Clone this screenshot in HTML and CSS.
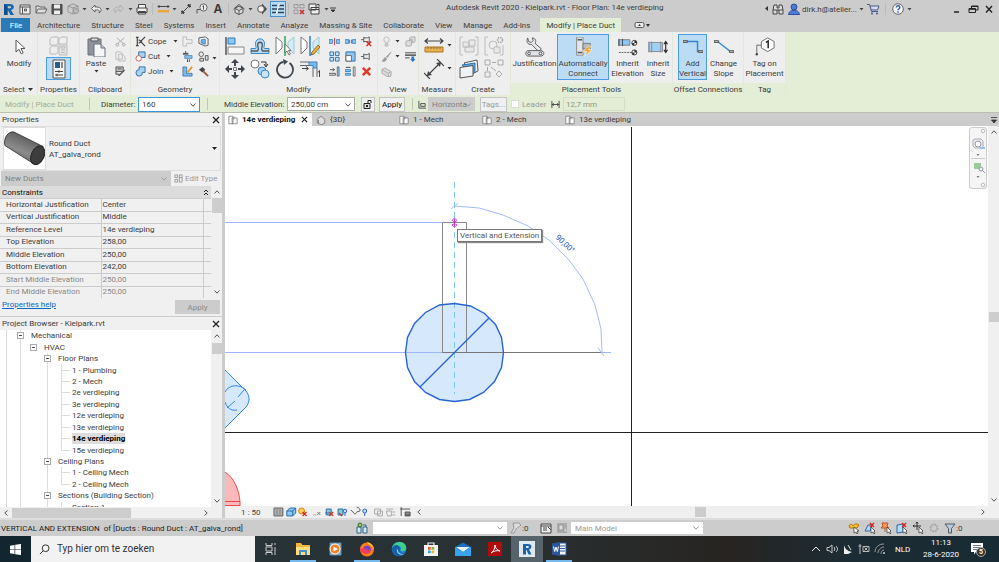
FILE: index.html
```html
<!DOCTYPE html>
<html lang="en">
<head>
<meta charset="utf-8">
<title>Autodesk Revit 2020 - Kielpark.rvt</title>
<link rel="stylesheet" href="styles.css">
</head>
<body>
<svg class="defs" aria-hidden="true">
  <symbol id="caret" viewBox="0 0 7 16"><path d="M1.500 7h4l-2 2.500z" fill="#444"/></symbol>
  <symbol id="dn" viewBox="0 0 7 5"><path d="M1.500 1h4l-2 2.500z" fill="#333"/></symbol>
  <symbol id="chev" viewBox="0 0 8 8"><path d="M1.500 2.500 4 5.200 6.500 2.500" fill="none" stroke="#555"/></symbol>
  <symbol id="x" viewBox="0 0 8 8"><path d="M1 1l6 6M7 1L1 7" stroke="#222" stroke-width="1.300"/></symbol>
  <symbol id="plan" viewBox="0 0 12 12"><path d="M1 1.500h5v9H1zM5 3.500h6v7H5zM7 2v3" fill="#fafafa" stroke="#777" stroke-width=".9"/></symbol>
</svg>
<div class="app">

<header class="titlebar">
  <div class="qat">
    <button class="ic" aria-label="Revit"><svg viewBox="0 0 16 16"><path d="M3 3h6c5 0 5 5 1 6l3 5h-3.500L7 9.500H6.500V14H3zM6.500 5.300v2H9c1.500 0 1.500-2 0-2z" fill="#1667ae"/><path d="M3 3l3.500 2.300V14H3z" fill="#0d4f8f"/></svg></button>
    <button class="ic" aria-label="Home"><svg viewBox="0 0 16 16"><path d="M3 4h10v9H3zM3 6h10M5.500 6v7M7.500 8h2v2h-2z" fill="#eee" stroke="#555"/></svg></button>
    <button class="ic" aria-label="Open"><svg viewBox="0 0 16 16"><path d="M3 12V5h3l1 1h5v2M3 12l2-4h9l-2 4z" fill="#ddd" stroke="#666"/></svg></button>
    <button class="ic" aria-label="Save"><svg viewBox="0 0 16 16"><path d="M3 3.500h10v9.500H3z" fill="#555" stroke="#444"/><path d="M5 3.500h6v4H5zM5 9.500h6V13H5z" fill="#eee"/></svg></button>
    <button class="ic" aria-label="Sync"><svg viewBox="0 0 16 16"><path d="M3 5l5-2 5 2v6l-5 2-5-2zM3 5l5 2 5-2M8 7v6" fill="#ccc" stroke="#999"/><circle cx="11" cy="10" r="2.500" fill="#bbb" stroke="#999"/></svg></button>
    <svg class="ca"><use href="#caret"/></svg>
    <button class="ic" aria-label="Undo"><svg viewBox="0 0 16 16"><path d="M7 4L3.500 7.500 7 11V9c4-.5 5 .5 4 3 4-3 2-6.500-4-6z" fill="#eee" stroke="#555" stroke-width=".9"/></svg></button>
    <svg class="ca"><use href="#caret"/></svg>
    <button class="ic" aria-label="Redo"><svg viewBox="0 0 16 16"><path d="M9 4l3.500 3.500L9 11V9c-4-.5-5 .5-4 3-4-3-2-6.500 4-6z" fill="#ccc" stroke="#aaa" stroke-width=".9"/></svg></button>
    <svg class="ca"><use href="#caret"/></svg>
    <button class="ic" aria-label="Print"><svg viewBox="0 0 16 16"><path d="M4.500 7V3.500h7V7M3 7h10v4.500H3zM4.500 10.500h7v2.500h-7z" fill="#f2f2f2" stroke="#444"/></svg></button>
    <i class="bar"></i>
    <button class="ic" aria-label="Measure"><svg viewBox="0 0 16 16"><path d="M3 5.500h11M4.500 4L3 5.500 4.500 7M12.500 4L14 5.500 12.500 7" fill="none" stroke="#444"/><path d="M3 9h11v2.500H3z" fill="#e9a73c"/></svg></button>
    <svg class="ca"><use href="#caret"/></svg>
    <button class="ic" aria-label="Dimension"><svg viewBox="0 0 16 16"><path d="M4 12L12 4M3 10l3 3M10 3l3 3" stroke="#444"/><path d="M3 13l1-4 3 3zM13 3l-1 4-3-3z" fill="#444"/></svg></button>
    <button class="ic" aria-label="Tag"><svg viewBox="0 0 16 16"><circle cx="9.500" cy="6.500" r="3.600" fill="#eee" stroke="#666"/><path d="M3 12.500V8.500h3M8.500 5.500l1-.8v4" fill="none" stroke="#555"/></svg></button>
    <button class="ic glyph">A</button>
    <i class="bar"></i>
    <button class="ic" aria-label="3D view"><svg viewBox="0 0 16 16"><path d="M2.500 8L8 3.500 13.500 8M4 7.500v4l4 2 4-2v-4L8 5z" fill="#ddd" stroke="#555"/><path d="M4 7.500l4 2 4-2M8 9.500v4" fill="none" stroke="#555"/></svg></button>
    <svg class="ca"><use href="#caret"/></svg>
    <button class="ic" aria-label="Section"><svg viewBox="0 0 16 16"><path d="M8 2.500l5 5.500-5 5.500z" fill="#444"/><circle cx="7" cy="8" r="3.300" fill="#eee" stroke="#555"/></svg></button>
    <button class="ic on" aria-label="Thin lines"><svg viewBox="0 0 16 16"><path d="M2 4.500h5M9 4.500h5M2 8h5M8 8h6M2 11.500h4M8 11.500h6" stroke="#2c4258" stroke-width="1.500"/><path d="M9.500 3L6 13" stroke="#fff"/></svg></button>
    <i class="bar"></i>
    <button class="ic" aria-label="Close hidden"><svg viewBox="0 0 16 16"><path d="M3 3.500h4v3.500H3zM9 3.500h4v3.500H9zM3 9h4v3.500H3z" fill="none" stroke="#888" stroke-dasharray="1.500 .7"/><path d="M9 9l4 4M13 9l-4 4" stroke="#c33" stroke-width="1.700"/></svg></button>
    <button class="ic" aria-label="Switch windows"><svg viewBox="0 0 16 16"><path d="M2 3h7v6H2zM4 6.500h8v6.500H4zM4 8.500h8M10 3.500h2v2" fill="#eee" stroke="#444"/></svg></button>
    <svg class="ca"><use href="#caret"/></svg>
    <svg class="ca"><path d="M0 7h6M1 9h4l-2 2z" stroke="#333" fill="#333" stroke-width=".9"/></svg>
  </div>
  <h1 class="title">Autodesk Revit 2020 - Kielpark.rvt - Floor Plan: 14e verdieping</h1>
  <div class="info">
    <svg class="ca"><path d="M5 5v5L2 7.500z" fill="#333"/></svg>
    <button class="ic" aria-label="Search"><svg viewBox="0 0 16 16"><path d="M4 4h3v3h2V4h3l1 5v4H9V9H7v4H3V9zM3 9h4M9 9h4" fill="#ddd" stroke="#444"/></svg></button>
    <button class="ic" aria-label="Account"><svg viewBox="0 0 16 16"><circle cx="8" cy="6" r="3" fill="#4f7bd8" stroke="#2a4e9e"/><path d="M2.500 13.500c.5-3.500 3-4 5.500-4s5 .5 5.500 4z" fill="#4f7bd8" stroke="#2a4e9e"/></svg></button>
    <span class="user">dirk.h@atelier...</span>
    <svg class="ca"><use href="#caret"/></svg>
    <button class="ic" aria-label="Store"><svg viewBox="0 0 16 16"><path d="M2 3.500h2.500l2 7H13M5 5h9l-1.500 4H6" fill="#dde" stroke="#455a8c"/><circle cx="7" cy="12.500" r="1" fill="#455a8c"/><circle cx="12" cy="12.500" r="1" fill="#455a8c"/></svg></button>
    <i class="bar wide"></i>
    <button class="ic" aria-label="Help"><svg viewBox="0 0 16 16"><circle cx="8" cy="8" r="5.300" fill="#f4f4f4" stroke="#667"/><path d="M6.300 6.500c0-2.300 3.500-2.200 3.500 0C9.800 8 8 7.800 8 9.200M8 10.300v1.400" fill="none" stroke="#2460b0" stroke-width="1.400"/></svg></button>
    <svg class="ca"><use href="#caret"/></svg>
  </div>
  <div class="wbtns">
    <button class="ic" aria-label="Minimize"><svg viewBox="0 0 16 16"><path d="M5 11h5" stroke="#222" stroke-width="1.500"/></svg></button>
    <button class="ic" aria-label="Restore"><svg viewBox="0 0 16 16"><path d="M6.500 7V5h6.500v4h-2M4 7.500h6.500v4H4zM4 8.300h6.500M6.500 5.500H13" fill="none" stroke="#222"/></svg></button>
    <button class="ic" aria-label="Close"><svg viewBox="0 0 16 16"><path d="M5 5l6 6.500M11 5l-6 6.500" stroke="#222" stroke-width="1.400"/></svg></button>
  </div>
</header>

<nav class="tabs">
  <a class="file" href="#">File</a><a href="#">Architecture</a><a href="#">Structure</a><a href="#">Steel</a><a href="#">Systems</a><a href="#">Insert</a><a href="#">Annotate</a><a href="#">Analyze</a><a href="#">Massing &amp; Site</a><a href="#">Collaborate</a><a href="#">View</a><a href="#">Manage</a><a href="#">Add-Ins</a><a class="ctx" href="#">Modify | Place Duct</a>
  <button class="ribtoggle" aria-label="Ribbon display"><svg width="20" height="10"><rect x="2" y="2.500" width="9" height="5" rx="1.500" fill="#eee" stroke="#555"/><path d="M5 6l1.500-2L8 6zM13 4h4l-2 3z" fill="#333"/></svg></button>
</nav>

<section class="ribbon">
  <div class="panel p-select"><div class="body"><button class="big">
    <svg class="i20" viewBox="0 0 20 20"><path d="M7 3v12l3-2.700 2.200 4.500 2-1-2.200-4.300H16z" fill="#fff" stroke="#555"/></svg><span>Modify</span></button></div><div class="lab">Select <svg width="7" height="5"><path d="M1 1h5L3.500 4z" fill="#333"/></svg></div></div>

  <div class="panel p-props"><div class="body stack">
    <button class="cell25" aria-label="Type properties"><svg class="i20" viewBox="0 0 20 20"><path d="M1 3l2-2h6v6l-2 2H1zM10 3l2-2h6v6l-2 2h-6zM1 12l2-2h6v6l-2 2H1z" fill="#eee" stroke="#bbb"/><path d="M10 8h8v11h-8zM12 10h4v2h-4zM12 14h4M12 16.500h4" fill="#e4e4e4" stroke="#bbb"/></svg></button>
    <button class="cell25 hot" aria-label="Properties"><svg class="i20" viewBox="0 0 20 20"><path d="M4 1h12v18H4z" fill="#f6f6f6" stroke="#555"/><path d="M6 3h5v6H6z" fill="#2a5d88"/><path d="M13 3v6M6 12.500h8M6 16h8" stroke="#444" stroke-width="1.200"/><path d="M10 11.200v2.600M8 14.700v2.600" stroke="#444"/></svg></button></div><div class="lab">Properties</div></div>

  <div class="panel p-clip"><div class="body"><button class="big paste"><svg class="i20" viewBox="0 0 20 20"><path d="M2 2h13v16H2z" fill="#8e939b" stroke="#6a707a"/><path d="M5 1h7v3H5z" fill="#ddd" stroke="#555"/><path d="M8 7h7l4 4v9H8z" fill="#f5f6f8" stroke="#6a707a"/><path d="M15 7v4h4" fill="#ccd" stroke="#6a707a"/></svg><span>Paste</span><svg class="dd"><use href="#dn"/></svg></button>
    <div class="col"><button class="sm" aria-label="Cut"><svg viewBox="0 0 12 12"><path d="M2 2l8 7M10 2L2 9" stroke="#aaa"/><circle cx="2.500" cy="9.500" r="1.500" fill="none" stroke="#aaa"/><circle cx="9.500" cy="9.500" r="1.500" fill="none" stroke="#aaa"/></svg></button>
    <button class="sm" aria-label="Copy"><svg viewBox="0 0 12 12"><path d="M1 1h5l2 2v6H1zM4 3.500h4l3 3V11H4z" fill="#eee" stroke="#bbb"/></svg></button>
    <button class="sm" aria-label="Match type"><svg viewBox="0 0 12 12"><path d="M1 1h8v5H1zM3 3h4M1 6v3h4" fill="#bbb" stroke="#555"/><path d="M11 5L5 11H3.500L4 9.500 10 4z" fill="#555"/></svg></button></div></div><div class="lab">Clipboard</div></div>

  <div class="panel p-geo"><div class="body"><div class="col texts">
    <button class="tx"><svg viewBox="0 0 12 12"><path d="M1 1.500h3M1 10.500h3M2.500 1.500v9M11 1L6 6l5 5M4 4l3 2-3 2" fill="none" stroke="#444" stroke-width="1.300"/></svg><span>Cope</span><svg class="dd"><use href="#dn"/></svg></button>
    <button class="tx"><svg viewBox="0 0 12 12"><path d="M4 1h7v6H4z" fill="#a9d2f1" stroke="#2a6ca5"/><circle cx="4" cy="8" r="3" fill="#fff" stroke="#c55"/></svg><span>Cut</span><svg class="dd"><use href="#dn"/></svg></button>
    <button class="tx"><svg viewBox="0 0 12 12"><path d="M4.500 1H11v6H8a3.500 3.500 0 1 1-3.500-3z" fill="#a9d2f1" stroke="#2a6ca5"/></svg><span>Join</span><svg class="dd"><use href="#dn"/></svg></button></div>
    <div class="col"><button class="sm" aria-label="Wall joins"><svg viewBox="0 0 12 12"><path d="M1 1h4v3h6v4H5v3H1z" fill="#eee" stroke="#bbb"/></svg></button>
    <button class="sm" aria-label="Beam joins"><svg viewBox="0 0 12 12"><path d="M1 2h6v2H1z" fill="#555"/><path d="M3 5h8v3H3z" fill="#8cc3ec" stroke="#2a6ca5" stroke-width=".7"/><path d="M6 9v3M8 9v3M4 0v2" stroke="#444"/></svg></button>
    <button class="sm" aria-label="Paint"><svg viewBox="0 0 12 12"><path d="M1 1v10h10V8H5V1z" fill="#7db8e6" stroke="#2a6ca5" stroke-width=".8"/><path d="M11 1L6 7" stroke="#e69a2c" stroke-width="2"/></svg></button></div>
    <div class="col"><button class="sm" aria-label="Split face"><svg viewBox="0 0 12 12"><path d="M1 2l7-1 3 2v7l-3 1-7-3z" fill="#f4f4f4" stroke="#555"/><path d="M3.500 4L8 3.500V9l-4.500-1.500z" fill="#6fb3ea" stroke="#2a6ca5" stroke-width=".7"/></svg></button>
    <button class="sm" aria-label="Demolish"><svg viewBox="0 0 12 12"><circle cx="3.500" cy="3.500" r="2.500" fill="#eee" stroke="#555"/><path d="M2 8h4v3H2zM8 5h3v5H8z" fill="#ddd" stroke="#555"/></svg></button>
    <button class="sm" aria-label="Hammer"><svg viewBox="0 0 12 12"><path d="M1 4l4-3 3 3-3 3z" fill="#444"/><path d="M6 6l5 5" stroke="#a5563c" stroke-width="2"/></svg></button></div>
    <svg class="dd mid"><use href="#dn"/></svg></div><div class="lab">Geometry</div></div>

  <div class="panel p-mod"><div class="body"><div class="bigs">
    <button class="cell25" aria-label="Align"><svg class="i20" viewBox="0 0 20 20"><path d="M1 1v18" stroke="#555" stroke-width="1.500"/><path d="M3 2h7v6H3z" fill="#8cc8f5" stroke="#2a7ac0"/><path d="M3 11h16v7H3z" fill="#f6f6f6" stroke="#888"/></svg></button>
    <button class="cell25" aria-label="Offset"><svg class="i20" viewBox="0 0 20 20"><path d="M1 17.500v-5h4.500c1 0 .5-1.500 0-4C4.500 1 15.500 1 14.500 8.500c-.5 2.500-1 4 0 4H19v5H1z" fill="#b8dcf6" stroke="#3b85c2"/><path d="M1 15h6.500c2-1.500 0-3.500.2-6.500.3-3 4.300-3 4.600 0 .2 3-1.800 5 .2 6.500H19" fill="none" stroke="#555" stroke-width="1.300"/></svg></button>
    <button class="cell25" aria-label="Mirror pick axis"><svg class="i20" viewBox="0 0 20 20"><path d="M1 1l6 5v6l-6 6z" fill="#fff" stroke="#777"/><path d="M19 1l-6 5v6l6 6z" fill="#d4ecfa" stroke="#9cc"/><path d="M10 0v20" stroke="#32a852" stroke-width="1.500"/><path d="M10 8v9l2-2 2 4 1.500-1-2-3.500H16z" fill="#fff" stroke="#555" stroke-width=".8"/></svg></button>
    <button class="cell25" aria-label="Mirror draw axis"><svg class="i20" viewBox="0 0 20 20"><path d="M1 1l6 5v6l-6 6z" fill="#fff" stroke="#777"/><path d="M19 1l-6 5v6l6 6z" fill="#d4ecfa" stroke="#9cc"/><path d="M10 0v20" stroke="#2a7fd0" stroke-width="1.500"/><path d="M18 9l-6 7-1 3 3-1 6-7z" fill="#f0b040" stroke="#7a5a20" stroke-width=".8"/></svg></button>
    <button class="cell25" aria-label="Move"><svg class="i20" viewBox="0 0 20 20"><path d="M10 0l4 4H6zM10 20l4-4H6zM0 10l4-4v8zM20 10l-4-4v8zM9 4h2v3H9zM9 13h2v3H9zM4 9h3v2H4zM13 9h3v2h-3z" fill="#3f4650"/><path d="M8.500 8.500h3v3h-3z" fill="none" stroke="#777"/></svg></button>
    <button class="cell25" aria-label="Copy"><svg class="i20" viewBox="0 0 20 20"><circle cx="5" cy="5" r="4" fill="#fff" stroke="#777"/><circle cx="12" cy="12" r="4" fill="#a9d2f1" stroke="#3b85c2"/><circle cx="15" cy="15" r="4" fill="#c9e3f7" stroke="#3b85c2"/><path d="M11 3h5v4M14 5l2 3 2-3" fill="none" stroke="#333"/></svg></button>
    <button class="cell25" aria-label="Rotate"><svg class="i20" viewBox="0 0 20 20"><path d="M14.500 4a8 8 0 1 1-6-1.200" fill="none" stroke="#3f4650" stroke-width="1.800"/><path d="M8 0l5 2.500L9 6z" fill="#3f4650"/></svg></button>
    <button class="cell25" aria-label="Trim"><svg class="i20" viewBox="0 0 20 20"><path d="M0 3h9M0 6.500h9" stroke="#666"/><path d="M9 3h8v6h-4V6.500H9z" fill="#7db8e6" stroke="#3b85c2"/><path d="M13 9v9M17 9v9" stroke="#666"/><path d="M2 9.500h6M6 7.500l2.500 2L6 11.500M19.500 18v-6M18 13.500l1.500-2 1 2" fill="none" stroke="#444"/></svg></button></div>
    <div class="grid3">
    <button class="sm" aria-label="Split"><svg viewBox="0 0 12 12"><path d="M0 4h4v4H0zM8 4h4v4H8z" fill="#8cc8f5" stroke="#3b85c2"/><path d="M6 2v8" stroke="#c44"/></svg></button>
    <button class="sm" aria-label="Split gap"><svg viewBox="0 0 12 12"><path d="M0 4h4v4H0zM8 4h4v4H8z" fill="#8cc8f5" stroke="#3b85c2"/><path d="M5 4v4M7 4v4" stroke="#c44"/></svg></button>
    <button class="sm" aria-label="Unpin"><svg viewBox="0 0 12 12"><path d="M0 4h3M3 1v6M3 2h4l2-1v6L7 6H3" fill="#eee" stroke="#555"/><path d="M6 6l5 5M11 6l-5 5" stroke="#d22" stroke-width="1.500"/></svg></button>
    <button class="sm" aria-label="Array"><svg viewBox="0 0 12 12"><path d="M1 1h4v4H1zM7 1h4v4H7zM1 7h4v4H1zM7 7h4v4H7z" fill="#c9e3f7" stroke="#2a6ca5"/></svg></button>
    <button class="sm" aria-label="Scale"><svg viewBox="0 0 12 12"><path d="M1 1h10v10H1z" fill="#8cc8f5" stroke="#2a6ca5"/><path d="M1 5h6v6H1z" fill="#fff" stroke="#666"/></svg></button>
    <button class="sm" aria-label="Pin"><svg viewBox="0 0 12 12"><path d="M0 6h3M3 3v6M3 4h4l2-1.500v7L7 8H3" fill="#eee" stroke="#555"/></svg></button>
    <button class="sm" aria-label="Extend single"><svg viewBox="0 0 12 12"><path d="M1 4h5M4 2.500L6 4 4 5.500M0 8h7v2H0" stroke="#555" fill="none"/><path d="M9 1h2v10H9z" fill="#8cc8f5" stroke="#555" stroke-width=".8"/></svg></button>
    <button class="sm" aria-label="Extend multiple"><svg viewBox="0 0 12 12"><path d="M0 4h6v2H0zM0 8h6v2H0z" stroke="#3b85c2" fill="#8cc8f5"/><path d="M1 1.500h5" stroke="#444"/><path d="M9 1h2v10H9z" fill="#ddd" stroke="#555" stroke-width=".8"/></svg></button>
    <button class="sm" aria-label="Delete"><svg viewBox="0 0 12 12"><path d="M2 2l8 8M10 2l-8 8" stroke="#e03a2e" stroke-width="2.800"/></svg></button></div></div><div class="lab">Modify</div></div>

  <div class="panel p-view"><div class="body"><div class="col">
    <button class="sm" aria-label="Hide"><svg viewBox="0 0 12 12"><circle cx="6" cy="4" r="3" fill="#eee" stroke="#bbb"/><path d="M4.500 8h3v3h-3z" fill="#ccc" stroke="#bbb"/></svg></button>
    <button class="sm" aria-label="Override"><svg viewBox="0 0 12 12"><path d="M11 1L6 6l1 1zM5 7c-2 0-2 3-4 4 3 1 5 0 5-3z" fill="#999" stroke="#aaa"/></svg></button>
    <button class="sm" aria-label="Box"><svg viewBox="0 0 12 12"><path d="M1 4l3-2 7 4v5l-3 1-7-4zM1 4l7 4v4M8 8l3-2" fill="#ddd" stroke="#aaa"/></svg></button></div>
    <div class="col thin"><span><svg class="dd"><use href="#dn"/></svg></span><span><svg class="dd"><use href="#dn"/></svg></span></div>
    <div class="col"><button class="sm" aria-label="Displace"><svg viewBox="0 0 12 12"><path d="M1 6l2-1h4v5l-1 1H1zM5 2l2-1h4v5l-1 1H8V4H5z" fill="#ddd" stroke="#aaa"/></svg></button>
    <button class="sm" aria-label="Linework"><svg viewBox="0 0 12 12"><path d="M0 2h12" stroke="#444"/><path d="M0 4.500h12" stroke="#444" stroke-width="1.500"/><path d="M0 7.500h5" stroke="#444"/><path d="M7 6h3v3h1.500l-3 3-3-3H7z" fill="#2f78bd"/></svg></button></div></div><div class="lab">View</div></div>

  <div class="panel p-meas"><div class="body"><div class="bigcol">
    <button class="cell25" aria-label="Measure"><svg class="i20" viewBox="0 0 20 20"><path d="M1 5h18M4 2.500L1 5l3 2.500M16 2.500L19 5l-3 2.500" fill="none" stroke="#444" stroke-width="1.200"/><path d="M1 11h18v5H1z" fill="#eab04a" stroke="#a87722"/><path d="M4 11v2M7 11v2M10 11v2M13 11v2M16 11v2" stroke="#865"/></svg></button>
    <button class="cell25" aria-label="Dimension"><svg class="i20" viewBox="0 0 20 20"><path d="M3 17L17 3M0 14l6 6M13 0l7 7" stroke="#444" stroke-width="1.200"/><path d="M3 17l1-5 4 4zM17 3l-1 5-4-4z" fill="#444"/></svg></button></div>
    <div class="carets"><svg class="dd"><use href="#dn"/></svg><svg class="dd"><use href="#dn"/></svg></div></div><div class="lab">Measure</div></div>

  <div class="panel p-create"><div class="body"><div class="bigs two">
    <button class="cell25" aria-label="Create assembly"><svg class="i20" viewBox="0 0 20 20"><path d="M4 1H1v18h3M16 1h3v18h-3" fill="none" stroke="#bbb"/><path d="M4 6h6v5H4zM10 4h6v6h-6zM6 11h9v5H6z" fill="#e8e8e8" stroke="#bbb"/></svg></button>
    <button class="cell25" aria-label="Create parts"><svg class="i20" viewBox="0 0 20 20"><path d="M4 1H1v18h3M16 19h3V9" fill="none" stroke="#bbb"/><circle cx="9" cy="9" r="4" fill="#eee" stroke="#bbb"/><path d="M10 11h6v6h-6z" fill="#e8e8e8" stroke="#bbb"/><circle cx="16" cy="4" r="2.500" fill="none" stroke="#aaa" stroke-width="1.600" stroke-dasharray="1.500 .8"/></svg></button>
    <button class="cell25" aria-label="Create group"><svg class="i20" viewBox="0 0 20 20"><path d="M5 4l13-3 1 11-4 2z" fill="#fff" stroke="#555"/><path d="M3 6l13-2v9l-3 3z" fill="#5aa7e8" stroke="#2a6ca5"/><path d="M1 8.500l13-2v10.500l-13 2z" fill="#f0f2f4" stroke="#555"/></svg></button>
    <button class="cell25" aria-label="Create similar"><svg class="i20" viewBox="0 0 20 20"><path d="M1 1h5v5H1zM14 1h5v5h-5zM1 13h5v5H1zM15 12l3 3-3 3-3-3zM8 3.500h4M3.500 8v4M7 8l5 4" fill="#eee" stroke="#aaa"/></svg></button></div></div><div class="lab">Create</div></div>

  <div class="panel ctxp p-place"><div class="body">
    <button class="big"><svg class="i22" viewBox="0 0 22 22"><path d="M3 1l1 4 3 1 2-2-1-3c3 0 5 3 3 6l7 6-3 3-8-8C3 9 1 5 3 1z" fill="#e8eaee" stroke="#555"/><path d="M3 15h14c5 0 5 6 0 6H4c-4 0-4-5-1-6z" fill="#dfe3e8" stroke="#555"/><circle cx="4.500" cy="18" r="1.500" fill="#fff" stroke="#444"/><circle cx="17" cy="18" r="1.500" fill="#fff" stroke="#444"/></svg><span>Justification</span></button>
    <button class="big hot"><svg class="i22" viewBox="0 0 22 22"><path d="M4 0h7v20H4z" fill="#e4e7ea" stroke="#888"/><path d="M5 3h5M5 17h5" stroke="#555" stroke-width="1.500"/><path d="M11 7h8v6h-8z" fill="#b7bcc4" stroke="#777"/><path d="M17 10l-6 6h4l-2 5 8-7h-4l3-4z" fill="#f7a427" stroke="#fff" stroke-width=".6"/></svg><span>Automatically<br>Connect</span></button>
    <button class="big"><svg class="i22" viewBox="0 0 22 22"><path d="M1 3h12v6H1z" fill="#8cc8f5" stroke="#777"/><path d="M1 2v8M5 2v8" stroke="#444"/><path d="M1 17h14" stroke="#555" stroke-dasharray="2 1"/><circle cx="18" cy="6.500" r="2.800" fill="#fff" stroke="#333"/><circle cx="18" cy="17" r="2.800" fill="#fff" stroke="#333"/><path d="M18 6.500V3.700a2.800 2.800 0 0 1 2.800 2.800zM18 6.500v2.800a2.800 2.800 0 0 1-2.800-2.800zM18 17v-2.800a2.800 2.800 0 0 1 2.800 2.800zM18 17v2.800a2.800 2.800 0 0 1-2.800-2.800z" fill="#333"/></svg><span>Inherit<br>Elevation</span></button>
    <button class="big"><svg class="i22" viewBox="0 0 22 22"><path d="M1 6h15v10H1z" fill="#9fd0f3" stroke="#888"/><path d="M1 5v12M4 5v12M14 5v12" stroke="#889"/><path d="M19.500 5v12M17.500 8l2-3 2 3M17.500 14l2 3 2-3" fill="none" stroke="#222" stroke-width="1.200"/></svg><span>Inherit<br>Size</span></button></div><div class="lab">Placement Tools</div></div>

  <div class="panel ctxp p-off"><div class="body">
    <button class="big hot"><svg class="i22" viewBox="0 0 22 22"><path d="M2 5h14v11h4" fill="none" stroke="#2f86d6" stroke-width="1.600"/><path d="M0 4h5v2H0zM17 15h5v2h-5z" fill="#bbb" stroke="#555"/></svg><span>Add<br>Vertical</span></button>
    <button class="big"><svg class="i22" viewBox="0 0 22 22"><path d="M4 5l14 11" fill="none" stroke="#2f86d6" stroke-width="1.600"/><path d="M0 4h5v2H0zM17 15h5v2h-5z" fill="#bbb" stroke="#555"/></svg><span>Change<br>Slope</span></button></div><div class="lab">Offset Connections</div></div>

  <div class="panel ctxp p-tag"><div class="body"><button class="big"><svg class="i22" viewBox="0 0 22 22"><path d="M2 19V9h6" fill="none" stroke="#666"/><circle cx="2" cy="19" r="1.300" fill="#444"/><path d="M14 1l7 4v7l-7 4-7-4V5z" fill="#fff" stroke="#666"/><path d="M12 6l2.500-1.500v8" fill="none" stroke="#222" stroke-width="1.600"/></svg><span>Tag on<br>Placement</span></button></div><div class="lab">Tag</div></div>
</section>

<form class="options">
  <span class="mode">Modify | Place Duct</span><i class="bar"></i>
  <label class="l1" for="dia">Diameter:</label>
  <span class="combo focus"><select id="dia"><option>160</option></select><svg><use href="#chev"/></svg></span><i class="bar b2"></i>
  <label class="l2" for="mel">Middle Elevation:</label>
  <span class="combo mel"><select id="mel"><option>250,00 cm</option></select><svg><use href="#chev"/></svg></span>
  <button type="button" class="btn lock" aria-label="Lock elevation"><svg width="10" height="10"><path d="M1 4.500h6v5H1z" fill="#ddd" stroke="#222"/><path d="M5 4V1.500h3V4" fill="none" stroke="#222"/><path d="M3 6h2v2H3z" fill="#222"/></svg></button>
  <button type="button" class="btn apply">Apply</button><i class="bar b3"></i>
  <svg class="oi" viewBox="0 0 10 10"><path d="M1 1v8h8M3 4h5v3H3z" fill="none" stroke="#444"/></svg>
  <span class="combo off"><select aria-label="Tag orientation" disabled><option>Horizonta</option></select><svg><use href="#chev"/></svg></span>
  <button type="button" class="btn tags" disabled>Tags...</button>
  <input class="chk" type="checkbox" id="ldr" disabled><label class="gray" for="ldr">Leader</label>
  <svg class="oi ln" viewBox="0 0 10 10"><path d="M1 1v8M9 1v8M1 5h8M3 3.500L1.500 5 3 6.500M7 3.500L8.500 5 7 6.500" fill="none" stroke="#444"/></svg>
  <input class="len" type="text" value="12,7 mm" aria-label="Leader length" disabled>
</form>

<main class="work">
  <aside class="side">
    <section class="props">
      <header class="phead"><h2>Properties</h2><button aria-label="Close Properties"><svg><use href="#x"/></svg></button></header>
      <div class="type"><div class="thumb"><svg viewBox="0 0 42 42"><defs><linearGradient id="cyl" x1="0" y1="1" x2=".5" y2="0"><stop offset="0" stop-color="#444"/><stop offset=".5" stop-color="#8c8c8c"/><stop offset="1" stop-color="#555"/></linearGradient></defs><path d="M10 4C4 3-1 11 1 18l30 19 9-18z" fill="url(#cyl)" stroke="#222" stroke-width=".8"/><ellipse cx="34.500" cy="28" rx="6.500" ry="10" transform="rotate(25 34.500 28)" fill="#3d3d3d" stroke="#222"/></svg></div><p>Round Duct<br>AT_galva_rond</p><svg class="dd" viewBox="0 0 7 5"><path d="M1 1h5L3.500 4z" fill="#222"/></svg></div>
      <div class="inst"><span class="combo off"><select aria-label="Instance filter" disabled><option>New Ducts</option></select><svg><use href="#chev"/></svg></span><button class="edit" disabled><svg viewBox="0 0 10 10"><path d="M1 1h3v3H1zM6 1h3v8H6zM1 6h3v3H1zM6 4h3" fill="none" stroke="#999"/></svg>Edit Type</button></div>
      <div class="pgrid"><div class="pt"><div class="grp"><span>Constraints</span><svg viewBox="0 0 6 8"><path d="M1 4l2-2 2 2M1 7l2-2 2 2" fill="none" stroke="#222"/></svg></div>
        <table><tbody>
        <tr><th>Horizontal Justification</th><td>Center</td><td></td></tr>
        <tr><th>Vertical Justification</th><td>Middle</td><td></td></tr>
        <tr><th>Reference Level</th><td>14e verdieping</td><td></td></tr>
        <tr><th>Top Elevation</th><td>258,00</td><td></td></tr>
        <tr><th>Middle Elevation</th><td>250,00</td><td></td></tr>
        <tr><th>Bottom Elevation</th><td>242,00</td><td></td></tr>
        <tr class="ro"><th>Start Middle Elevation</th><td>250,00</td><td></td></tr>
        <tr class="ro"><th>End Middle Elevation</th><td>250,00</td><td></td></tr>
        </tbody></table></div>
        <div class="vs"><svg class="up"><use href="#chev"/></svg><i class="th t1"></i><svg><use href="#chev"/></svg></div></div>
      <div class="pfoot"><a href="#">Properties help</a><button disabled>Apply</button></div>
    </section>
    <section class="browser">
      <header class="phead"><h2>Project Browser - Kielpark.rvt</h2><button aria-label="Close Project Browser"><svg><use href="#x"/></svg></button></header>
      <div class="treewrap"><ul class="tree">
        <li class="n1"><b class="box"></b>Mechanical</li>
        <li class="n2"><b class="box"></b>HVAC</li>
        <li class="n3"><b class="box"></b>Floor Plans</li>
        <li class="n4">1 - Plumbing</li><li class="n4">2 - Mech</li><li class="n4">2e verdieping</li><li class="n4">3e verdieping</li><li class="n4">12e verdieping</li><li class="n4">13e verdieping</li><li class="n4 cur"><strong>14e verdieping</strong></li><li class="n4 last">15e verdieping</li>
        <li class="n3"><b class="box"></b>Ceiling Plans</li>
        <li class="n4">1 - Ceiling Mech</li><li class="n4 last">2 - Ceiling Mech</li>
        <li class="n3"><b class="box"></b>Sections (Building Section)</li>
        <li class="n4">Section 1</li>
      </ul><div class="vs"><svg class="up"><use href="#chev"/></svg><i class="th t2"></i><svg><use href="#chev"/></svg></div></div>
      <div class="hs"><svg class="lf"><use href="#chev"/></svg><i class="th t3"></i><svg class="rt"><use href="#chev"/></svg></div>
    </section>
  </aside>

  <section class="views">
    <nav class="vtabs">
      <a class="act" href="#"><svg><use href="#plan"/></svg>14e verdieping<svg class="cl"><use href="#x"/></svg></a>
      <a href="#"><svg viewBox="0 0 12 12"><path d="M1.500 5L6 1.500 10.500 5v5l-4 1.500-5-2zM3 6v4" fill="#ddd" stroke="#777"/></svg>{3D}</a>
      <a href="#"><svg><use href="#plan"/></svg>1 - Mech</a>
      <a href="#"><svg><use href="#plan"/></svg>2 - Mech</a>
      <a href="#"><svg><use href="#plan"/></svg>13e verdieping</a>
      <button aria-label="Tab list"><svg viewBox="0 0 8 8"><path d="M1 1.500h6M1.500 4h5L4 7z" fill="#333" stroke="#333" stroke-width=".8"/></svg></button>
    </nav>
    <div class="stage">
      <div class="canvas">
        <svg class="drawing" role="img" aria-label="Floor plan drawing"><g transform="translate(-225 -126)" fill="none">
          <path d="M631.500 127v380M225 432.500h770" stroke="#222"/>
          <path d="M225 370l21 21c4 5 4 11 0 16l-21 21z" fill="#d6e9fc"/>
          <path d="M225 370l21 21c4 5 4 11 0 16l-21 21" stroke="#3385ea"/>
          <path d="M225 392c4-8 15-8 21-2M225 402c2 6 6 9 12 8M227 408l8-7M238 397l6-7" stroke="#3385ea"/>
          <path d="M225 472c9 6 14 17 15 30v5h-15z" fill="#fcb9b9"/><path d="M225 472c9 6 14 17 15 30v5M225 501.500h15M225 505.500h15" stroke="#f04848"/>
          <path d="M454.500 303.500l16 2.500 14 7.500 11 11 6 13 2 15-2 15-7 14-11 11-14 7-15 2-15-2-14-7-11-11-7-14-2-15 2-15 7-14 11-11 14-7.500z" fill="#d6e9fc"/>
          <path d="M442.500 352.500v-130h24v130z" stroke="#888"/>
          <path d="M225 222.500h217M225 352.500h217M596 352.500h15" stroke="#9db8fa"/>
          <path d="M442 352.500h160" stroke="#777"/>
          <path d="M454.500 182v212" stroke="#7cc6e8" stroke-dasharray="6 4"/>
          <path d="M454.500 303.500l16 2.500 14 7.500 11 11 6 13 2 15-2 15-7 14-11 11-14 7-15 2-15-2-14-7-11-11-7-14-2-15 2-15 7-14 11-11 14-7.500zM420 387l68.500-68.500" stroke="#2763d3" stroke-width="1.400"/>
          <path d="M455 206l24 2 24 7 25 11 21 14 20 20 14 19 12 26 6 24 1 24M451 209l7-6M598 348l6 8" stroke="#a4bdf6"/>
          <path d="M454.500 219v7M452 220.500l2.500-2.500 2.500 2.500-2.500 1.500zM452 225l2.500-1.500L457 225l-2.500 2z" stroke="#c03fc8"/>
          <text class="ang" transform="translate(555 238) rotate(43)">90,00°</text>
        </g></svg>
        <div class="tip" role="tooltip">Vertical and Extension</div>
        <div class="navbar"><svg width="18" height="62"><circle cx="14" cy="4" r="1.800" fill="none" stroke="#bbb"/><circle cx="14" cy="58" r="1.800" fill="none" stroke="#bbb"/><path d="M6 12h6l2 2v7H6l-2-2v-6z" fill="#eee" stroke="#aab"/><circle cx="9" cy="17" r="3" fill="#fff" stroke="#99a"/><path d="M11 21h5" stroke="#9bc0e6" stroke-width="2"/><path d="M2 31.500h14" stroke="#ccc"/><path d="M5 36h7v6H5z" fill="#9c9"/><circle cx="12" cy="42" r="2" fill="#eee" stroke="#99a"/><path d="M13 43l3 3" stroke="#99a"/><path d="M7.500 27h3L9 29zM7.500 49h3L9 51z" fill="#777"/></svg></div>
      </div>
      <div class="vs"><svg class="up"><use href="#chev"/></svg><i class="th t4"></i><svg><use href="#chev"/></svg></div>
    </div>
    <div class="vbar"><span class="scale">1 : 50</span>
      <svg class="vicons" viewBox="0 0 144 12"><path d="M1 2h9v8H1z" fill="#ccc" stroke="#555"/><path d="M2 4h8M2 6h8M2 8h8M4 2v8M7 2v8" stroke="#777" stroke-width=".7"/><path d="M14 5l3-3h6v5l-3 3h-6zM14 5h6v5M20 5l3-3" fill="#8cc8f5" stroke="#2a6ca5"/><circle cx="29" cy="5" r="3" fill="#fc6" stroke="#c80"/><path d="M30 6l4 4M34 6l-4 4" stroke="#d22" stroke-width="1.300"/><path d="M41 9h1M43 9h1M45 6l3 3M48 6l-3 3" stroke="#777"/><path d="M54 3h5v6h-5zM53 7h4" stroke="#2a6ca5" fill="#8cc"/><path d="M57 6l4 4M61 6l-4 4" stroke="#c33" stroke-width="1.300"/><path d="M66 3h5v6h-5z" stroke="#2a6ca5" fill="#8cc"/><path d="M67 7l3 3" stroke="#c33" stroke-width="1.300"/><circle cx="73" cy="5" r="1.800" fill="#cdf" stroke="#36c"/><path d="M73 7v3" stroke="#36c"/><path d="M79 4l3 3c1 2 3 0 3-1s2 0 3-1 0-3-3-4" fill="none" stroke="#555"/><circle cx="93" cy="5" r="2" fill="#bdf" stroke="#36c"/><path d="M93 7v3" stroke="#36c"/><path d="M103 3h6v5h-6zM106 5h5v5h-5zM115 3h7M115 5h5v5h-4zM121 6h3M121 9h3" fill="none" stroke="#aaa"/><path d="M129 3h10M130 1v9M134 9h5M134 6h5v4h-5z" fill="#888" stroke="#555"/></svg>
      <svg class="lf"><use href="#chev"/></svg><i class="th t5"></i><svg class="rt"><use href="#chev"/></svg></div>
  </section>
</main>

<footer class="status">
  <span class="msg">VERTICAL AND EXTENSION&nbsp; of [Ducts : Round Duct : AT_galva_rond]</span>
  <svg class="si" viewBox="0 0 12 12"><path d="M1 5h4v6H1zM7 5h4v6H7z" fill="#cfe6f5" stroke="#368"/><circle cx="4" cy="3" r="2" fill="#9c6" stroke="#363"/><path d="M7 3h3v2" fill="none" stroke="#368"/></svg>
  <span class="combo ws"><select aria-label="Active workset"><option></option></select><svg><use href="#chev"/></svg></span>
  <svg class="si e1" viewBox="0 0 12 12"><path d="M3 1h6l2 2-5 4-2 4H1l3-5z" fill="#ddd" stroke="#999"/></svg><span class="cnt">:0</span>
  <svg class="si e2" viewBox="0 0 12 12"><path d="M1 2h10v9H1zM1 4h10M3 6h4M3 8h4" fill="#eee" stroke="#444"/><path d="M8 5l3 3" stroke="#444"/></svg>
  <svg class="si e3" viewBox="0 0 12 12"><path d="M1 1h10v10H1z" fill="#aaa"/><path d="M3 3h4v5H3zM8 4v6h3" fill="#ddd" stroke="#999"/></svg>
  <span class="combo mm"><select aria-label="Design option"><option>Main Model</option></select><svg><use href="#chev"/></svg></span>
  <div class="sel">
    <svg viewBox="0 0 12 12"><path d="M1 4c2-4 4 1 5-1s3-1 5 0l-2 3H2z" fill="#fb3" stroke="#a70"/><path d="M6 5v6l2-1 1 2 1-1-1-2h2z" fill="#fff" stroke="#444" stroke-width=".8"/></svg>
    <svg viewBox="0 0 12 12"><path d="M1 9l3-6h4l-2 6z" fill="#adf" stroke="#36a"/><path d="M6 1l4 4M10 1L6 5" stroke="#d22" stroke-width="1.500"/><path d="M7 5v6l2-1 1 2 1-1-1-2h1z" fill="#fff" stroke="#444" stroke-width=".8"/></svg>
    <svg viewBox="0 0 12 12"><path d="M2 1h6L7 4l2 2H1l2-2zM5 6v4" fill="#f95" stroke="#b52"/><path d="M7 5v6l2-1 1 2 1-1-1-2h1z" fill="#fff" stroke="#444" stroke-width=".8"/></svg>
    <svg viewBox="0 0 12 12"><path d="M1 3l6-1v8l-6 1z" fill="#adf" stroke="#36a"/><path d="M6 1l4 4M10 1L6 5" stroke="#d22" stroke-width="1.500"/><path d="M7 5v6l2-1 1 2 1-1-1-2h1z" fill="#fff" stroke="#444" stroke-width=".8"/></svg>
    <svg viewBox="0 0 12 12"><path d="M5 0v8M1 4h8M2.500 3L1 4l1.500 1M4 1.500L5 0l1 1.500" fill="none" stroke="#333"/><path d="M7 5v6l2-1 1 2 1-1-1-2h1z" fill="#fff" stroke="#444" stroke-width=".8"/></svg>
    <svg viewBox="0 0 12 12"><circle cx="6" cy="6" r="3.500" fill="none" stroke="#aaa" stroke-width="2" stroke-dasharray="2 .7"/></svg>
    <svg viewBox="0 0 12 12"><path d="M1 2h10L7.500 6.500V11h-3V6.500z" fill="#bcd" stroke="#556"/></svg><span>:0</span>
  </div>
</footer>

<div class="taskbar">
  <button class="start" aria-label="Start"><svg viewBox="0 0 12 12"><path d="M0 1.800L5 1v4.600H0zM5.700.9L12 0v5.600H5.700zM0 6.400h5V11l-5-.8zM5.700 6.400H12V12l-6.300-.9z" fill="#fff"/></svg></button>
  <label class="search"><svg viewBox="0 0 12 12"><circle cx="7.200" cy="4.600" r="3.700" fill="none" stroke="#222"/><path d="M4.500 7.500L1 11" stroke="#222"/></svg><input type="text" placeholder="Typ hier om te zoeken" aria-label="Search"></label>
  <div class="apps">
    <button aria-label="Task view"><svg viewBox="0 0 16 16"><path d="M3 2v2.500h6V2M3 14v-2.500h6V14M3 6h6v4H3zM12 2v2M12 6v8" fill="none" stroke="#ccc"/></svg></button>
    <button class="run" aria-label="File Explorer"><svg viewBox="0 0 16 16"><path d="M1 2h5l1.500 2H15v10H1z" fill="#f3b73f"/><path d="M1 6h14v8H1z" fill="#ffdc7c"/><path d="M4 14V9h8v5h-2v-3H6v3z" fill="#3f92d8"/></svg></button>
    <button aria-label="Media player"><svg viewBox="0 0 16 16"><path d="M3 2h11v12H3z" fill="#8fb4cf" stroke="#5f8bab"/><circle cx="8" cy="8" r="5" fill="#f07f24" stroke="#fff"/><path d="M6.500 5.500L11 8l-4.500 2.500z" fill="#fff"/></svg></button>
    <button class="run" aria-label="Firefox"><svg viewBox="0 0 16 16"><circle cx="8" cy="8.500" r="7" fill="#ff7a1f"/><path d="M8 1c4 1 7 4 7 8-1-4-3-4-4-5S9 3 8 1z" fill="#ffd23c"/><circle cx="8" cy="8.500" r="3.800" fill="#6f3fd0"/><path d="M1 7c2 2 4-1 6 1s4 1 4-1c2 5-4 7-7 5S1 9 1 7z" fill="#f23d5c"/></svg></button>
    <button aria-label="Edge"><svg viewBox="0 0 16 16"><circle cx="8" cy="8" r="7.300" fill="#1b7fd0"/><path d="M1 7c2-8 14-8 14.300 0 0 4-5 4-6 2 2-3-1-5-4-4S1 7 1 9z" fill="#3fd08c"/><path d="M1 7c3-5 8-3 8 1-1 3 2 5 5 4-3 4-9 4-11.500 0C1 10 1 8 1 7z" fill="#1a5ea8"/><path d="M6 8c-1 4 3 7 7 5-4 0-6-2-6-4z" fill="#7fd4f7"/></svg></button>
    <button aria-label="Store"><svg viewBox="0 0 16 16"><path d="M5 5V2h6v3" fill="none" stroke="#eee" stroke-width="1.200"/><path d="M1 4h14v11H1z" fill="#f4f4f4"/><path d="M5 6h2.700v2.700H5z" fill="#e8542c"/><path d="M8.500 6h2.700v2.700H8.500z" fill="#7db92c"/><path d="M5 9.500h2.700v2.700H5z" fill="#2a9fe8"/><path d="M8.500 9.500h2.700v2.700H8.500z" fill="#f8b818"/></svg></button>
    <button aria-label="Mail"><svg viewBox="0 0 16 16"><path d="M0 6l8-4.500L16 6v9H0z" fill="#1b6fbe"/><path d="M1 6h14l-7 5z" fill="#e8f2fa"/><path d="M0 6l8 5 8-5v9H0z" fill="#35a4ea"/></svg></button>
    <button aria-label="Acrobat"><svg viewBox="0 0 16 16"><path d="M1 1h14v14H1z" fill="#b30b0b"/><path d="M4 12c3-2 4-5 4-8 0 3 2 5 5 6-3-1-6 0-9 2z" fill="none" stroke="#fff"/></svg></button>
    <button class="now" aria-label="Revit"><svg viewBox="0 0 16 16"><path d="M0 0h16v16H0z" fill="#dfe7ef"/><path d="M4 3h5c4.500 0 4.500 4.500 1 5.500l2.500 5H9.500L7.500 9H7v4.500H4zM7 5v2h2c1.200 0 1.200-2 0-2z" fill="#1b63a8"/></svg></button>
    <button class="run" aria-label="Word"><svg viewBox="0 0 16 16"><path d="M7 2h8v12H7z" fill="#f4f6fa" stroke="#2b579a"/><path d="M9 5h5M9 7.500h5M9 10h5" stroke="#2b579a"/><path d="M1 2.500L9 1v14l-8-1.500z" fill="#2b579a"/><path d="M2.500 5.500L3.700 10.500 5 6l1.300 4.500 1.200-5" fill="none" stroke="#fff"/></svg></button>
  </div>
  <div class="tray">
    <svg viewBox="0 0 12 12"><path d="M2 8l4-4 4 4" fill="none" stroke="#eee"/></svg>
    <svg viewBox="0 0 12 12"><path d="M1 4.500h2L6 2v8L3 7.500H1zM8 4c1 1 1 3 0 4M10 3c2 2 2 4 0 6" fill="none" stroke="#ddd" stroke-width=".9"/></svg>
    <svg viewBox="0 0 12 12"><path d="M2 1c0 4 3 7 8 8L6 11H2z" fill="#eee"/><path d="M6 2l3 5" stroke="#ddd"/></svg>
    <svg viewBox="0 0 12 12"><path d="M2 1v10M.5 3h3M5 3.500h6v5H5zM6.500 4.500l3 3M9.500 4.500l-3 3" fill="none" stroke="#bbb"/></svg>
    <svg viewBox="0 0 12 12"><path d="M1 9c0-5 4-8 9-8M4 10c0-3 3-6 6-6M7 11c0-2 1-4 3-4" fill="none" stroke="#999"/><circle cx="10" cy="10" r="1" fill="#ccc"/></svg>
    <span class="lang">NLD</span>
    <span class="clock">11:13<br>28-6-2020</span>
    <span class="note"><svg viewBox="0 0 12 12"><path d="M0 0h12v9H5l-2 2.500V9H0z" fill="#fff"/><path d="M2 2.500h8M2 4.500h8M2 6.500h8" stroke="#456" stroke-width=".8"/></svg><b>5</b></span>
  </div>
</div>
</div>
</body>
</html>
```
FILE: styles.css
```css
* { box-sizing: border-box; }
html, body { height: 100%; margin: 0; }
body { font: 8px/11px Roboto, "Open Sans", sans-serif; color: #3c3c3c; background: #ccc; overflow: hidden; }
button, input, select { font: inherit; color: inherit; margin: 0; padding: 0; border: 0; background: none; }
h1, h2, p, ul { margin: 0; padding: 0; font: inherit; }
a { color: inherit; text-decoration: none; }
svg { display: block; flex: none; }
.defs { position: absolute; width: 0; height: 0; }
.app { display: flex; flex-direction: column; height: 100vh; }

/* title bar */
.titlebar { display: flex; align-items: center; height: 18px; flex: none; }
.qat, .info, .wbtns { display: flex; align-items: center; flex: none; }
.qat { padding-left: 1px; width: 446px; }
.ic { width: 16px; height: 16px; display: block; flex: none; }
.ic svg { width: 16px; height: 16px; }
.ic.on { background: #b9dcf5; outline: 1px solid #4a90d0; outline-offset: -1px; }
.glyph { font: bold 12px/16px "Open Sans", sans-serif; text-align: center; }
.ca { width: 7px; height: 16px; }
.bar { width: 1px; height: 12px; margin: 0 2px; background: #bbb; flex: none; }
.bar.wide { margin: 0 4px; }
.title { flex: 1; white-space: nowrap; padding-bottom: 3px; }
.info { width: 186px; }
.user { white-space: nowrap; width: 56px; }
.wbtns { width: 50px; }

/* ribbon tabs */
.tabs { display: flex; height: 14px; flex: none; padding-left: 1px; line-height: 15px; align-items: stretch; }
.tabs a { padding: 0 5px 0 6px; white-space: nowrap; }
.tabs .file { background: #2a7ab8; color: #fff; width: 29px; margin-right: 1px; text-align: center; }
.tabs .ctx { background: #e4eed6; padding: 0 6px; margin-left: 5px; }
.ribtoggle { margin-left: 12px; }

/* ribbon */
.ribbon { display: flex; height: 63px; flex: none; background: #e4eed6; }
.panel { display: flex; flex-direction: column; flex: none; background: #eee; border-right: 1px solid #e3e8dc; padding-top: 2px; }
.panel .body { flex: 1; display: flex; align-items: flex-start; }
.lab { height: 12px; line-height: 11px; display: flex; align-items: center; justify-content: center; gap: 2px; white-space: nowrap; }
.ctxp .lab { background: #e4eed6; }
.p-select { width: 38px; } .p-props { width: 42px; } .p-clip { width: 51px; } .p-geo { width: 89px; }
.p-mod { width: 158px; } .p-view { width: 41px; } .p-meas { width: 37px; } .p-create { width: 55px; }
.p-place { width: 162px; } .p-off { width: 71px; } .p-tag { width: 42px; }
.big { display: flex; flex-direction: column; align-items: center; line-height: 10px; padding-top: 2px; height: 46px; flex: none; white-space: nowrap; border: 1px solid transparent; }
.big span { margin-top: 2px; }
.p-select .big { width: 38px; }
.i20, .i22 { width: 20px; height: 20px; }
.hot { background: #bcdcf5; border: 1px solid #4a9be0; }
.cell25 { width: 25px; height: 23px; display: flex; align-items: center; justify-content: center; flex: none; }
.stack { flex-direction: column; padding-left: 8px; }
.col { display: flex; flex-direction: column; }
.col > *, .grid3 > * { height: 15px; display: flex; align-items: center; }
.sm { width: 16px; justify-content: center; }
.sm svg { width: 11px; height: 11px; }
.paste { width: 32px; }
.tx { gap: 2px; width: 44px; }
.tx svg { width: 11px; height: 11px; }
.dd { width: 7px; height: 5px; }
.tx .dd { width: 7px; height: 5px; margin-left: 3px; }
.p-geo .body { padding-left: 4px; }
.mid { margin-top: 22px; }
.bigs { display: grid; grid-template-columns: repeat(4, 25px); }
.bigs.two { grid-template-columns: repeat(2, 25px); }
.p-mod .body { padding-left: 2px; gap: 4px; }
.grid3 { display: grid; grid-template-columns: repeat(3, 16px); }
.thin { width: 8px; }
.carets { display: flex; flex-direction: column; gap: 18px; padding-top: 9px; }
.p-meas .body { padding-left: 2px; }
.p-place .big { width: 41px; } .p-place .hot { width: 52px; margin: 0 2px; } .p-place .big:nth-child(n+3) { width: 33px; }
.p-place .big:nth-child(4) { width: 28px; }
.p-place .body { padding-left: 3px; }
.p-off .body { padding-left: 5px; gap: 2px; }
.p-off .big { width: 29px; }
.p-tag .big { width: 41px; }

/* options bar */
.options { display: flex; align-items: center; height: 18px; flex: none; background: #e4eed6; border-bottom: 1px solid #b9c0ae; padding: 1px 0 0 5px; white-space: nowrap; }
.mode { width: 82px; color: #a3ab98; }
.options .bar { margin: 0 11px 0 2px; background: #bfc8b2; }
.options .b2 { margin: 0 16px 0 7px; }
.options .b3 { margin: 0 5px 0 7px; }
.l1 { width: 34px; }
.l2 { width: 61px; }
.combo { position: relative; display: flex; flex: none; background: #fff; border: 1px solid #aaa; height: 14px; }
.combo select { appearance: none; width: 100%; padding: 0 3px; border-radius: 0; line-height: 11px; opacity: 1; }
.combo svg { position: absolute; right: 2px; top: 3px; width: 8px; height: 8px; pointer-events: none; }
.focus { width: 62px; height: 15px; margin-left: 3px; border-color: #3a95e0; }
.mel { width: 68px; margin-left: 2px; }
.combo.off { background: #ccc; border-color: #ccc; color: #808080; width: 47px; margin-left: 1px; }
.combo.off svg { opacity: .4; }
.btn { height: 15px; background: #f0f0f0; border: 1px solid #c4c4c4; flex: none; }
.lock { width: 14px; margin: 0 4px 0 6px; display: flex; align-items: center; justify-content: center; }
.apply { width: 26px; color: #111; }
.tags { width: 27px; margin-left: 5px; color: #999; }
.chk { width: 8px; height: 8px; margin: 0 3px 0 4px; appearance: none; background: #fff; border: 1px solid #ddd; flex: none; }
.gray { color: #999; width: 29px; }
.oi { width: 9px; height: 9px; }
.len { width: 62px; margin-left: 3px; height: 14px; padding: 0 2px; border: 1px solid #d5dcc9; color: #8d9484; }

/* work area */
.work { flex: 1; min-height: 0; display: flex; border-bottom: 2px solid #ddd; }
.side { width: 225px; flex: none; display: flex; flex-direction: column; background: #f0f0f0; border-right: 3px solid #ccc; }
.phead { display: flex; justify-content: space-between; align-items: center; height: 13px; padding: 0 2px; }
.phead svg { width: 8px; height: 8px; }
.props { height: 204px; flex: none; display: flex; flex-direction: column; border-bottom: 1px solid #ccc; }
.type { height: 45px; display: flex; align-items: center; margin: 0 1px; padding: 0 2px; border: 1px solid #ddd; border-left: 0; }
.thumb { width: 43px; height: 43px; background: #fff; border: 1px solid #ddd; }
.type p { flex: 1; padding-left: 3px; }
.inst { display: flex; height: 15px; align-items: center; }
.inst .combo.off { width: 170px; height: 15px; align-items: center; }
.edit { display: flex; align-items: center; gap: 2px; padding-left: 3px; color: #999; white-space: nowrap; }
.edit svg { width: 9px; height: 9px; }
.pgrid { display: flex; height: 112px; }
.pt { flex: 1; overflow: hidden; }
.grp { height: 12px; padding: 0 2px; background: #dcdcdc; display: flex; justify-content: space-between; align-items: center; color: #111; }
.grp svg { width: 6px; height: 8px; }
table { width: 100%; height: 100px; border-collapse: collapse; table-layout: fixed; }
th, td { padding: 0; text-align: left; font-weight: normal; border-top: 1px solid #ccc; line-height: 10px; white-space: nowrap; }
th { width: 101px; padding-left: 6px; }
td { border-left: 1px solid #ccc; padding-left: 1px; }
td:last-child { width: 8px; }
.ro { color: #888; }
.vs { width: 11px; flex: none; background: #f0f0f0; display: flex; flex-direction: column; align-items: center; padding: 2px 0; }
.vs svg, .hs svg, .vbar .lf, .vbar .rt { width: 8px; height: 8px; }
.vs svg:last-child { margin-top: auto; }
.up { transform: rotate(180deg); }
.lf { transform: rotate(90deg); }
.rt { transform: rotate(-90deg); margin-left: auto; }
.th { background: #cdcdcd; display: block; flex: none; }
.t1 { width: 10px; height: 15px; margin-top: 2px; }
.t2 { width: 10px; height: 11px; margin-top: 3px; }
.t3 { width: 119px; height: 10px; margin-left: 2px; }
.t4 { width: 10px; height: 10px; margin-top: 176px; }
.t5 { width: 11px; height: 10px; margin-left: 272px; }
.pfoot { flex: 1; display: flex; justify-content: space-between; align-items: flex-start; padding: 1px 2px; }
.pfoot a { color: #0a68c8; text-decoration: underline; }
.pfoot button { width: 45px; height: 14px; margin-top: 1px; background: #ccc; color: #888; }
.browser { flex: 1; min-height: 0; display: flex; flex-direction: column; }
.treewrap { flex: 1; min-height: 0; display: flex; overflow: hidden; background: #fff; }
.tree { flex: 1; height: 183px; display: grid; grid-template-rows: repeat(16, 1fr); list-style: none; }
.tree li { --g: linear-gradient(#ddd, #ddd); --v: 100%; display: flex; align-items: center; line-height: 11px; white-space: nowrap; background: var(--g) 6px 0 / 1px 100% no-repeat, var(--g) 20px 0 / 1px 100% no-repeat; }
.tree .n1 { padding-left: 17px; }
.tree .n2 { padding-left: 30px; }
.tree .n3 { padding-left: 44px; background: var(--g) 6px 0 / 1px 100% no-repeat, var(--g) 20px 0 / 1px 100% no-repeat, var(--g) 47px 0 / 1px 100% no-repeat; }
.tree .n4 { padding-left: 72px; background: var(--g) 6px 0 / 1px 100% no-repeat, var(--g) 20px 0 / 1px 100% no-repeat, var(--g) 47px 0 / 1px 100% no-repeat, var(--g) 61px 0 / 1px var(--v) no-repeat, var(--g) 61px 50% / 9px 1px no-repeat; }
.tree .last { --v: 50%; }
.box { width: 7px; height: 7px; margin-right: 7px; border: 1px solid #aaa; background: linear-gradient(#446, #446) center / 3px 1px no-repeat #fff; }
.cur strong { background: #ddd; color: #000; }
.hs { height: 11px; display: flex; align-items: center; padding: 0 4px 0 2px; }
.hs .rt { margin-right: 8px; }

/* views */
.views { flex: 1; min-width: 0; display: flex; flex-direction: column; background: #f0f0f0; }
.vtabs { display: flex; height: 13px; background: #ccc; align-items: stretch; }
.vtabs a { width: 83px; display: flex; align-items: center; gap: 4px; padding-left: 4px; white-space: nowrap; }
.vtabs a svg { width: 10px; height: 10px; }
.vtabs .act { width: 87px; padding-left: 3px; background: #fff; font-weight: bold; color: #111; }
.vtabs .act .cl { width: 7px; height: 7px; margin-left: 2px; }
.vtabs button { margin-left: auto; padding-right: 1px; }
.vtabs button svg { width: 8px; height: 8px; }
.stage { flex: 1; min-height: 0; display: flex; }
.canvas { flex: 1; position: relative; background: #fff; overflow: hidden; }
.drawing { width: 100%; height: 100%; }
.ang { font-size: 8px; fill: #2050b8; }
.tip { position: absolute; left: 232px; top: 103px; height: 13px; padding: 0 2px; line-height: 12px; background: #fff; border: 1px solid #777; box-shadow: 1px 1px 1px #888; color: #555; white-space: nowrap; }
.navbar { position: absolute; right: 1px; top: 1px; width: 18px; height: 62px; background: #f5f5f5; border-radius: 3px; outline: 1px solid #ccc; outline-offset: -1px; }
.vbar { height: 12px; display: flex; align-items: center; padding-right: 2px; }
.scale { width: 48px; padding-left: 16px; white-space: nowrap; }
.vicons { width: 142px; height: 12px; }
.vbar .rt { margin-right: 10px; }

/* status bar */
.status { height: 16px; flex: none; display: flex; align-items: center; background: #ccc; white-space: nowrap; }
.msg { width: 356px; padding-left: 1px; color: #222; }
.si { width: 12px; height: 12px; }
.status .combo { height: 12px; border-color: #fff; }
.status .combo svg { top: 1px; opacity: .6; }
.ws { width: 134px; margin-left: 5px; }
.e1 { margin-left: 3px; } .cnt { width: 14px; }
.e2 { margin-left: 4px; } .e3 { margin: 0 3px 0 4px; }
.mm { width: 132px; color: #999; }
.sel { margin-left: auto; display: flex; align-items: center; gap: 4px; width: 151px; }
.sel svg { width: 12px; height: 12px; }
.sel span { margin-left: -4px; }

/* taskbar */
.taskbar { height: 26px; flex: none; display: flex; align-items: stretch; background: linear-gradient(90deg, #22343c, #2a3133 50%, #272421 73%, #1c2c34 85%, #182a33); color: #fff; }
.start { width: 31px; display: flex; align-items: center; justify-content: center; background: #132630; }
.start svg { width: 11px; height: 11px; }
.search { width: 224px; background: #f2f2f2; display: flex; align-items: center; gap: 7px; padding-left: 8px; }
.search svg { width: 11px; height: 11px; }
.search input { flex: 1; min-width: 0; font-size: 10px; line-height: 14px; }
.search input::placeholder { color: #333; opacity: 1; }
.apps { display: flex; }
.apps button { width: 32px; display: flex; align-items: center; justify-content: center; }
.apps svg { width: 16px; height: 16px; }
.run { background: linear-gradient(#76b9ed, #76b9ed) center bottom / 26px 2px no-repeat; }
.now { background: #56636a; }
.tray { margin-left: auto; display: flex; align-items: center; gap: 4px; }
.tray svg { width: 12px; height: 12px; }
.lang { margin-left: 5px; width: 20px; }
.clock { width: 44px; text-align: center; line-height: 12px; }
.note { position: relative; width: 32px; padding-left: 4px; }
.note b { position: absolute; left: 9px; top: 4px; width: 10px; height: 10px; border-radius: 50%; background: #333; border: 1px solid #aaa; font-size: 7px; line-height: 8px; text-align: center; }
```
